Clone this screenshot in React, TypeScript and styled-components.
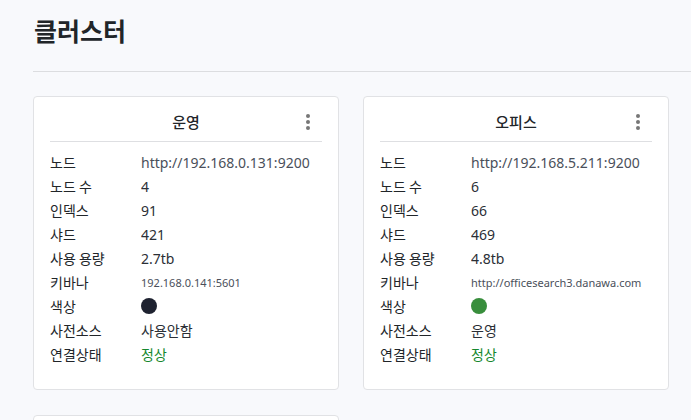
import React from "react";
import styled, { createGlobalStyle } from "styled-components";

const Global = createGlobalStyle`
  html, body { margin: 0; padding: 0; background: #f8f9fc; }
  body { font-family: "Noto Sans", "Noto Sans CJK KR", sans-serif; color: #212529; }
`;

const Page = styled.div`
  padding: 0 0 0 33px;
`;

const Header = styled.header`
  border-bottom: 1px solid #dcdde0;
  display: flex;
  align-items: center;
  padding-bottom: 8px;
  box-sizing: border-box;
  height: 72px;
`;

const Title = styled.h1`
  margin: 0;
  font-family: "Noto Sans CJK KR", sans-serif;
  font-size: 25px;
  font-weight: 700;
  color: #212529;
  line-height: 1;
  padding-left: 1px;
  margin-top: -2px;
`;

const Grid = styled.div`
  display: grid;
  grid-template-columns: 306px 306px;
  gap: 25px 24px;
  padding-top: 24px;
`;

const Card = styled.section`
  background: #fff;
  border: 1px solid #e1e2e5;
  border-radius: 4px;
  padding: 0 16px 23px 16px;
  min-height: 200px;
`;

const CardHead = styled.div`
  display: grid;
  grid-template-columns: 28px 1fr 28px;
  align-items: center;
  height: 44px;
  border-bottom: 1px solid #dedfe2;
  margin-bottom: 8px;
`;

const CardTitle = styled.div`
  grid-column: 2;
  text-align: center;
  font-family: "Noto Sans CJK KR", sans-serif;
  font-size: 15px;
  font-weight: 500;
  color: #212529;
  padding-top: 4px;
`;

const Kebab = styled.button`
  grid-column: 3;
  justify-self: center;
  border: 0;
  background: none;
  padding: 0;
  margin-top: 6px;
  display: flex;
  flex-direction: column;
  gap: 2px;
  cursor: pointer;
  span {
    width: 4px;
    height: 4px;
    border-radius: 50%;
    background: #777;
    display: block;
  }
`;

const Row = styled.div`
  display: grid;
  grid-template-columns: 91px 1fr;
  align-items: center;
  height: 24px;
  font-size: 14px;
  white-space: nowrap;
`;

const Label = styled.div`
  font-family: "Noto Sans CJK KR", sans-serif;
  color: #212529;
`;

const Value = styled.div<{ $ok?: boolean; $muted?: boolean; $small?: boolean }>`
  font-family: "Noto Sans", "Noto Sans CJK KR", sans-serif;
  font-size: ${(p) => (p.$small ? "11px" : "14px")};
  color: ${(p) => (p.$ok ? "#16882e" : p.$muted ? "#4a4f5a" : "#2b2f36")};
  overflow: hidden;
`;

const Dot = styled.span<{ $color: string }>`
  display: block;
  width: 16px;
  height: 16px;
  border-radius: 50%;
  background: ${(p) => p.$color};
`;

type Cluster = {
  name: string;
  node: string;
  count: string;
  index: string;
  shard: string;
  usage: string;
  kibana: string;
  color: string;
  dict: string;
};

const clusters: Cluster[] = [
  {
    name: "운영",
    node: "http://192.168.0.131:9200",
    count: "4",
    index: "91",
    shard: "421",
    usage: "2.7tb",
    kibana: "192.168.0.141:5601",
    color: "#1e2230",
    dict: "사용안함",
  },
  {
    name: "오피스",
    node: "http://192.168.5.211:9200",
    count: "6",
    index: "66",
    shard: "469",
    usage: "4.8tb",
    kibana: "http://officesearch3.danawa.com",
    color: "#388e3c",
    dict: "운영",
  },
];

function ClusterCard({ c }: { c: Cluster }) {
  return (
    <Card>
      <CardHead>
        <CardTitle>{c.name}</CardTitle>
        <Kebab aria-label="menu">
          <span />
          <span />
          <span />
        </Kebab>
      </CardHead>
      <Row><Label>노드</Label><Value $muted>{c.node}</Value></Row>
      <Row><Label>노드 수</Label><Value>{c.count}</Value></Row>
      <Row><Label>인덱스</Label><Value>{c.index}</Value></Row>
      <Row><Label>샤드</Label><Value>{c.shard}</Value></Row>
      <Row><Label>사용 용량</Label><Value>{c.usage}</Value></Row>
      <Row><Label>키바나</Label><Value $muted $small>{c.kibana}</Value></Row>
      <Row><Label>색상</Label><Value><Dot $color={c.color} /></Value></Row>
      <Row><Label>사전소스</Label><Value>{c.dict}</Value></Row>
      <Row><Label>연결상태</Label><Value $ok>정상</Value></Row>
    </Card>
  );
}

export default function App() {
  return (
    <>
      <Global />
      <Page>
        <Header>
          <Title>클러스터</Title>
        </Header>
        <Grid>
          {clusters.map((c) => (
            <ClusterCard key={c.name} c={c} />
          ))}
          <Card />
        </Grid>
      </Page>
    </>
  );
}
